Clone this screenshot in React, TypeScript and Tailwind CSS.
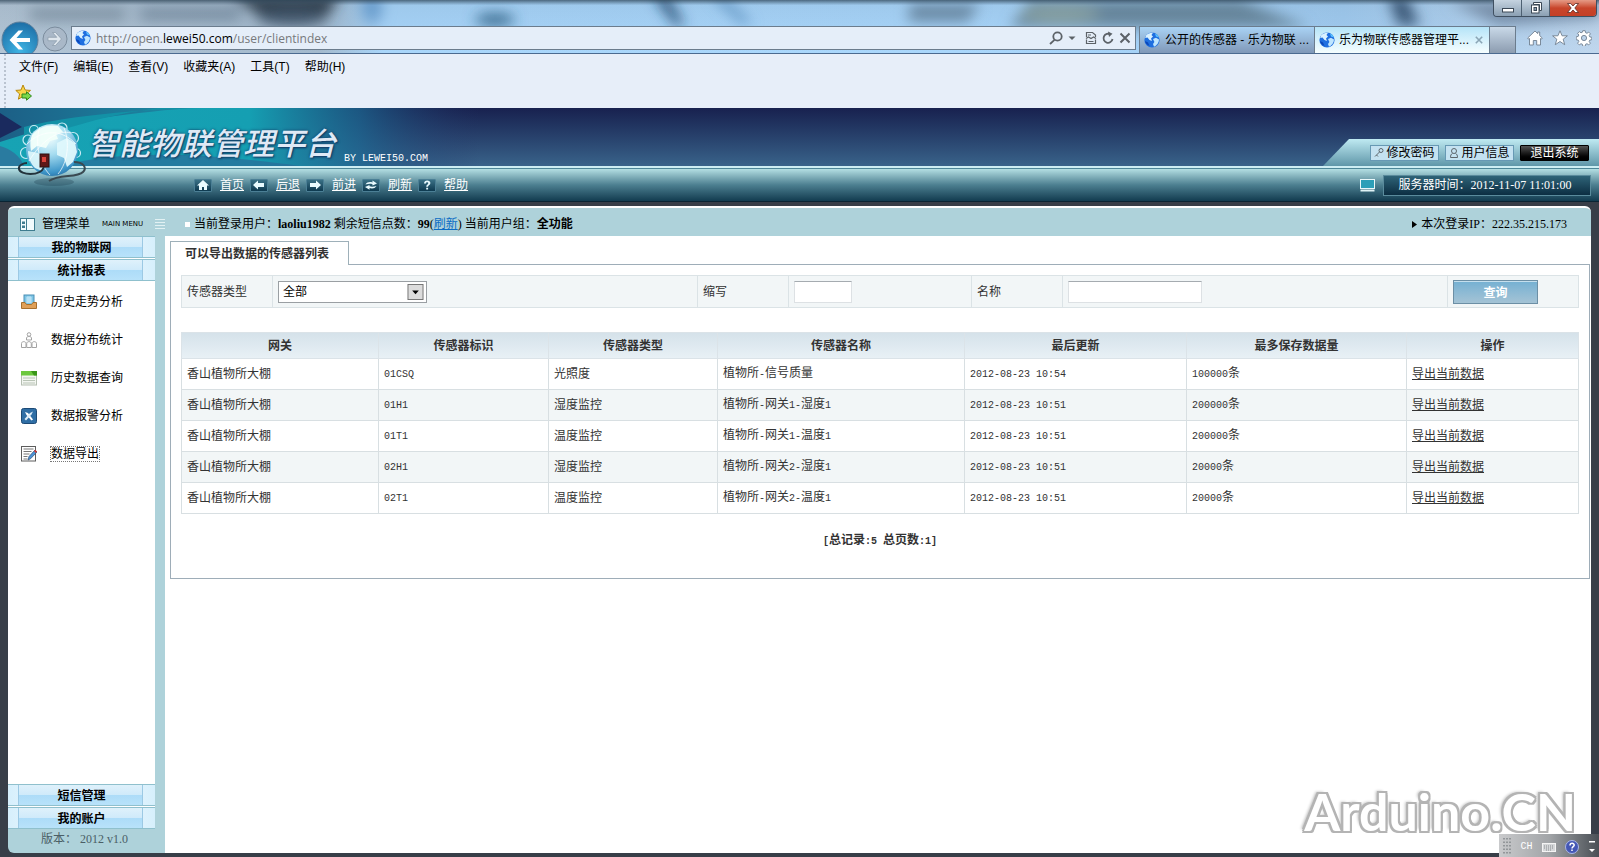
import { useState } from 'react';
import type { ReactNode } from 'react';

type Sensor = {
  gateway: string;
  code: string;
  type: string;
  name: string;
  updated: string;
  limit: string;
};

const sensors: Sensor[] = [
  { gateway: '香山植物所大棚', code: '01CSQ', type: '光照度', name: '植物所-信号质量', updated: '2012-08-23 10:54', limit: '100000条' },
  { gateway: '香山植物所大棚', code: '01H1', type: '湿度监控', name: '植物所-网关1-湿度1', updated: '2012-08-23 10:51', limit: '200000条' },
  { gateway: '香山植物所大棚', code: '01T1', type: '温度监控', name: '植物所-网关1-温度1', updated: '2012-08-23 10:51', limit: '200000条' },
  { gateway: '香山植物所大棚', code: '02H1', type: '湿度监控', name: '植物所-网关2-湿度1', updated: '2012-08-23 10:51', limit: '20000条' },
  { gateway: '香山植物所大棚', code: '02T1', type: '温度监控', name: '植物所-网关2-温度1', updated: '2012-08-23 10:51', limit: '20000条' },
];

const headings = ['网关', '传感器标识', '传感器类型', '传感器名称', '最后更新', '最多保存数据量', '操作'];

const browserMenu = ['文件(F)', '编辑(E)', '查看(V)', '收藏夹(A)', '工具(T)', '帮助(H)'];

// Latin runs are set in a small monospace next to the Chinese text
const Mixed = ({ text }: { text: string }) => (
  <>
    {text.split(/([\x20-\x7e]+)/).map((part, i) =>
      i % 2 === 1 ? (
        <span key={i} className="font-['Liberation_Mono',monospace] text-[10px] whitespace-pre">{part}</span>
      ) : (
        part
      )
    )}
  </>
);

const SiteGlobe = () => (
  <svg viewBox="0 0 16 16" className="h-4 w-4 shrink-0">
    <circle cx="8" cy="8" r="7.6" fill="#1f6fe0" />
    <path d="M2 3.5C4 1 7 .4 9 .8L7.5 3 9 4.5 7 6.5 8 9 5.5 8 3.500 5.500 1.200 6z" fill="#d9f1ff" />
    <path d="M9 7l3-1.200 3 1.800c0 3-2 6-5 7.200L9 12l1.400-2z" fill="#bfe6ff" />
    <path d="M1 9l3 1.500L5.500 14C3 13 1.200 11 1 9z" fill="#0b46b8" />
    <path d="M11 1.400c2 .8 3.400 2.200 4 4.200l-3-1z" fill="#5cc4ff" />
  </svg>
);

const TitleBackdrop = () => (
  <svg className="absolute inset-0 h-full w-full" viewBox="0 0 1599 54" preserveAspectRatio="none" aria-hidden="true">
    <defs>
      <filter id="soft" x="-20%" y="-60%" width="140%" height="220%">
        <feGaussianBlur stdDeviation="7" />
      </filter>
      <linearGradient id="glass" x1="0" x2="1" y1="0" y2="0">
        <stop offset="0" stopColor="#b4c6d6" />
        <stop offset=".2" stopColor="#a3b9cd" />
        <stop offset=".24" stopColor="#a9d6fb" />
        <stop offset=".6" stopColor="#aad7fc" />
        <stop offset=".84" stopColor="#a2cdf2" />
        <stop offset="1" stopColor="#c0d7ee" />
      </linearGradient>
      <linearGradient id="topshade" x1="0" x2="0" y1="0" y2="1">
        <stop offset="0" stopColor="#2c4355" stopOpacity=".75" />
        <stop offset=".1" stopColor="#3a5268" stopOpacity=".1" />
        <stop offset="1" stopColor="#3a5268" stopOpacity="0" />
      </linearGradient>
    </defs>
    <rect width="1599" height="54" fill="url(#glass)" />
    <g filter="url(#soft)">
      <path d="M230-6h110l-14 24-60 2z" fill="#30404e" />
      <rect x="30" y="10" width="95" height="9" fill="#76899a" />
      <rect x="140" y="10" width="100" height="9" fill="#6d8296" />
      <ellipse cx="292" cy="18" rx="34" ry="8" fill="#42566c" />
      <ellipse cx="372" cy="8" rx="10" ry="16" fill="#6ea5d8" />
      <ellipse cx="495" cy="20" rx="20" ry="6" fill="#2f6488" />
      <path d="M654-4l12-2 18 32h-8z" fill="#1c446c" />
      <path d="M712-4h10l30 28h-10z" fill="#5b93c4" />
      <path d="M910 4h70l-12 18h-60z" fill="#6d8da8" />
      <path d="M1030 0h210l70 28H1010z" fill="#6a8aa0" />
      <ellipse cx="1060" cy="14" rx="40" ry="8" fill="#8fa9a8" />
      <path d="M1388-4h18l14 30h-22z" fill="#3a5878" />
      <path d="M1450 2l149-2v18l-100 8z" fill="#7b93ad" />
    </g>
    <rect width="1599" height="54" fill="url(#topshade)" />
  </svg>
);

const BrowserChrome = () => (
  <div className="text-black">
    <div className="relative flex h-[54px] flex-col overflow-hidden border-b border-[#4b6a90]">
      <TitleBackdrop />
      <div className="relative flex h-[26px] items-start justify-end pr-[2px]">
        <div className="flex h-[17px] overflow-hidden rounded-b border border-t-0 border-[#3f4f60]">
          <button aria-label="最小化" className="flex w-7 items-center justify-center border-r border-[#4d6072] bg-gradient-to-b from-[#c5d3e0] to-[#8ba0b3]">
            <svg viewBox="0 0 14 12" className="h-3 w-3.5"><rect x="1.5" y="6.5" width="11" height="3.5" fill="#fff" stroke="#3b4856" /></svg>
          </button>
          <button aria-label="还原" className="flex w-7 items-center justify-center border-r border-[#4d6072] bg-gradient-to-b from-[#c5d3e0] to-[#8ba0b3]">
            <svg viewBox="0 0 14 12" className="h-3 w-3.5">
              <path d="M4.5.5h8v8h-2v-6h-6z" fill="#fff" stroke="#3b4856" />
              <rect x="2.5" y="3" width="7.5" height="8" fill="#fff" stroke="#3b4856" />
              <rect x="5" y="5.5" width="2.5" height="3" fill="#8ba0b3" stroke="#3b4856" />
            </svg>
          </button>
          <button aria-label="关闭窗口" className="flex w-[46px] items-center justify-center bg-gradient-to-b from-[#e59a86] via-[#c8452b] to-[#c43f26]">
            <svg viewBox="0 0 14 12" className="h-3 w-3.5"><path d="M1.5 1.5h3.2L7 4l2.3-2.5h3.2L8.8 6l3.7 4.5H9.3L7 8l-2.3 2.5H1.5L5.2 6z" fill="#fff" stroke="#5a2a24" strokeWidth=".8" /></svg>
          </button>
        </div>
      </div>
      <div className="relative flex flex-1 items-start">
        <div className="flex w-[71px] shrink-0 items-center gap-[3px] pl-px">
          <button aria-label="后退" className="-mt-[7px] -mb-2 h-[38px] w-[38px] shrink-0">
            <svg viewBox="0 0 38 38" className="h-[38px] w-[38px]">
              <defs>
                <radialGradient id="back" cx=".5" cy=".8" r=".8">
                  <stop offset="0" stopColor="#3fb4e4" />
                  <stop offset="1" stopColor="#1d6ea6" />
                </radialGradient>
              </defs>
              <circle cx="19" cy="19" r="18" fill="url(#back)" stroke="#5e7f9b" />
              <path d="M17.5 9.5L8.5 19l9 9.500h4.600L15.500 21H29v-4H15.500l6.600-7.500z" fill="#fff" />
            </svg>
          </button>
          <button aria-label="前进" className="h-[26px] w-[26px] shrink-0">
            <svg viewBox="0 0 26 26" className="h-[26px] w-[26px]">
              <circle cx="13" cy="13" r="12" fill="#a9b8c8" stroke="#7b8c9d" />
              <path d="M13.500 6.500l6 6.500-6 6.500h-3l4.300-4.800H6v-3.400h8.800l-4.300-4.800z" fill="#dfe7ee" stroke="#8798a8" strokeWidth=".7" />
            </svg>
          </button>
        </div>
        <div className="flex h-6 flex-1 items-center border border-[#6b7c8d] bg-[#e5eef9] pl-[3px] pr-1">
          <SiteGlobe />
          <p className="ml-[5px] flex-1 pt-0.5 font-['Open_Sans',sans-serif] text-[12px] text-[#77797c]">
            http://open.<span className="text-black">lewei50.com</span>/user/clientindex
          </p>
          <div className="flex items-center gap-[5px] text-[#5c6268]">
            <svg viewBox="0 0 14 14" className="h-3.5 w-3.5" fill="none" stroke="currentColor" strokeWidth="1.800"><circle cx="8.500" cy="5.500" r="4.200" /><path d="M5.500 8.800L1 13" /></svg>
            <svg viewBox="0 0 8 8" className="h-2 w-2"><path d="M.5 2.500h7L4 6z" fill="currentColor" /></svg>
            <svg viewBox="0 0 12 14" className="ml-1 h-3.5 w-3" fill="none" stroke="currentColor" strokeWidth="1.200"><path d="M1.500 6V1.500h6l3 2.500v2M1.500 8.500v4h9v-4M3 4h3M1 7.500l2.500-1.500 2.500 1.500L8.500 6 11 7.500M3.500 10.500h5" /></svg>
            <svg viewBox="0 0 12 14" className="h-3.5 w-3" fill="none" stroke="currentColor" strokeWidth="1.800"><path d="M8.500 3.500A4.500 4.500 0 1 0 10.500 8" /><path d="M6 .5l4.500 2.300L7 6z" fill="currentColor" stroke="none" /></svg>
            <svg viewBox="0 0 12 14" className="h-3.5 w-3" stroke="currentColor" strokeWidth="2"><path d="M1.500 2.500l9 9M10.500 2.500l-9 9" /></svg>
          </div>
        </div>
        <div className="ml-[3px] flex h-[27px] w-[377px] shrink-0 text-[12px]">
          <button className="flex w-44 items-center gap-[5px] border border-b-0 border-[#6b7c8d] bg-gradient-to-b from-[#a9d3f5] to-[#8098b8] pl-1">
            <SiteGlobe />
            <span className="whitespace-nowrap">公开的传感器 - 乐为物联 ...</span>
          </button>
          <button className="flex w-[174px] items-center gap-1 border-t border-[#6b7c8d] bg-gradient-to-b from-[#b5e4f8] to-[#f6feff] pl-1">
            <SiteGlobe />
            <span className="whitespace-nowrap">乐为物联传感器管理平...</span>
            <svg viewBox="0 0 10 10" className="ml-0.5 h-2 w-2" stroke="#8aa5b5" strokeWidth="2"><path d="M1 1l8 8M9 1L1 9" /></svg>
          </button>
          <button aria-label="新标签页" className="w-[27px] border border-b-0 border-[#6b7c8d] bg-gradient-to-b from-[#c9d9e8] to-[#8c9cb0]" />
        </div>
        <div className="flex h-6 w-[83px] shrink-0 items-center justify-between pl-[11px] pr-[7px]">
          <button aria-label="主页">
            <svg viewBox="0 0 16 16" className="h-4 w-4" fill="#fff" stroke="#6f7f90" strokeWidth=".9"><path d="M8 1l2.700 2.600V2h2v3.600L15.300 8l-1 1.200-.8-.7V15H9.700v-4.500H6.300V15H2.500V8.500l-.8.7-1-1.200z" /></svg>
          </button>
          <button aria-label="收藏">
            <svg viewBox="0 0 16 16" className="h-4 w-4" fill="#fff" stroke="#6f7f90" strokeWidth=".9"><path d="M8 .8l2.100 5h5.300l-4.200 3.400 1.500 5.500L8 11.500l-4.700 3.200 1.500-5.500L.6 5.800h5.300z" /></svg>
          </button>
          <button aria-label="工具">
            <svg viewBox="0 0 16 16" className="h-4 w-4" fill="#fff" stroke="#6f7f90" strokeWidth=".9">
              <path d="M6.800.7h2.400l.4 2 1.400.6 1.700-1.200 1.700 1.700-1.200 1.700.6 1.400 2 .4v2.400l-2 .4-.6 1.400 1.200 1.700-1.700 1.700-1.700-1.200-1.400.6-.4 2H6.800l-.4-2-1.400-.6-1.700 1.200-1.700-1.700 1.200-1.700-.6-1.400-2-.4V6.800l2-.4.6-1.400-1.200-1.700 1.700-1.700L5 2.800l1.400-.6z" />
              <circle cx="8" cy="8" r="2.600" fill="#bcd3ea" />
            </svg>
          </button>
        </div>
      </div>
    </div>
    <div className="flex h-[54px] items-stretch bg-[#e7eef9] pl-1">
      <div className="border-l-2 border-dotted border-[#bac3d0]" />
      <div className="flex flex-col">
        <nav className="flex h-[26px] items-center gap-[15px] pl-[13px] text-[12px]">
          {browserMenu.map((item) => (
            <button key={item}>{item}</button>
          ))}
        </nav>
        <button aria-label="添加到收藏夹栏" className="mt-1 ml-[9px] h-[18px] w-[18px]">
          <svg viewBox="0 0 18 18" className="h-[18px] w-[18px]">
            <path d="M8 1l2.200 5 5.300.4-4 3.500 1.300 5.300L8 12.400l-4.600 2.800 1.200-5.300L.8 6.400 6 6z" fill="#f8d64a" stroke="#b8860b" />
            <path d="M7 10h4.500V7.800L16.500 12l-5 4.200V14H7z" fill="#7bd84a" stroke="#2f8a1c" />
          </svg>
        </button>
      </div>
    </div>
  </div>
);

const BannerArt = () => (
  <svg className="absolute inset-y-0 left-0 h-full w-[480px]" viewBox="0 0 480 58" preserveAspectRatio="none" aria-hidden="true">
    <defs>
      <linearGradient id="teal" x1="0" x2="1">
        <stop offset="0" stopColor="#17a3b4" />
        <stop offset=".52" stopColor="#159fb2" />
        <stop offset=".75" stopColor="#1d6c96" stopOpacity=".7" />
        <stop offset="1" stopColor="#26376a" stopOpacity="0" />
      </linearGradient>
      <linearGradient id="deep" x1="0" x2="1">
        <stop offset="0" stopColor="#1c5f86" />
        <stop offset="1" stopColor="#1c8aa4" />
      </linearGradient>
    </defs>
    <rect width="480" height="58" fill="url(#teal)" />
    <path d="M0 0h190C120 6 60 14 0 34z" fill="url(#deep)" />
    <path d="M0 5l22 14L0 30z" fill="#1a2a5e" />
    <path d="M0 38c10 3 20 9 24 20H0z" fill="#2a7ba0" />
    <path d="M60 58c60-16 140-14 240 0z" fill="#2b6c98" opacity=".7" />
    <path d="M24 19C60 10 120 2 200 0h-40C110 6 80 16 24 34z" fill="#1391a6" />
  </svg>
);

const GlobeLogo = () => (
  <svg className="absolute top-[13px] left-4 h-[66px] w-[72px]" viewBox="0 0 72 66" role="img" aria-label="乐为物联">
    <defs>
      <radialGradient id="orb" cx=".45" cy=".25" r=".85">
        <stop offset="0" stopColor="#f4ffff" />
        <stop offset=".4" stopColor="#a5dcf0" />
        <stop offset=".8" stopColor="#3d95c8" />
        <stop offset="1" stopColor="#1c5d94" />
      </radialGradient>
    </defs>
    <ellipse cx="38" cy="61" rx="20" ry="4" fill="#1b3a4c" opacity=".3" />
    <g fill="none" stroke="#c9ecf6" strokeWidth="1.200">
      <circle cx="12" cy="19" r="5" /><circle cx="10" cy="32" r="5.500" /><circle cx="18" cy="9" r="4.500" /><circle cx="46" cy="7" r="5" />
      <circle cx="57" cy="17" r="5.500" /><circle cx="60" cy="32" r="4.500" />
    </g>
    <circle cx="36" cy="29" r="26" fill="url(#orb)" />
    <path d="M16 14c6-8 17-11 26-9l5 6-7 2 2 5-8 2-4 7-9-2-6 5c-1-6-1-11 1-16z" fill="#f1fffa" opacity=".95" />
    <path d="M41 22l10-5 8 5 2 9-4 10-6 5-3-9-7-3z" fill="#dff8fc" opacity=".95" />
    <path d="M12 30l10 2 7 8-3 10-7-3c-4-4-7-10-7-17z" fill="#e0f8fc" opacity=".9" />
    <g fill="none" stroke="#fff" strokeWidth=".9" opacity=".8">
      <path d="M11 23c14-14 34-16 49 0M13 40c12-20 30-32 42-28M24 6c-6 16 0 38 10 48M48 7c6 14 4 34-6 46" />
    </g>
    <rect x="24" y="33" width="9" height="13" fill="#5e1818" stroke="#2c1010" />
    <rect x="26" y="36" width="4" height="5" fill="#d8443c" />
    <path d="M28 46c-4 10-24 8-25 2-1-4 5-6 8-6" fill="none" stroke="#23333c" strokeWidth="2" />
    <path d="M58 41c10 0 13 6 9 10-6 6-24 2-34 9" fill="none" stroke="#3a4a52" strokeWidth="2" />
  </svg>
);

const NavIcon = ({ children }: { children: ReactNode }) => (
  <span className="flex h-[13px] w-[18px] items-center justify-center rounded-[1px] border border-[#4b7f95] bg-gradient-to-b from-[#3a7186] to-[#0d3a50]">
    <svg viewBox="0 0 14 12" className="h-3 w-3.5" fill="#e9fbff">{children}</svg>
  </span>
);

const navLinks = [
  { label: '首页', icon: <path d="M7 1L1 6.500h2V11h3V8h2v3h3V6.500h2z" /> },
  { label: '后退', icon: <path d="M1 6l5-4.500v2.500h6v4H6v2.500z" /> },
  { label: '前进', icon: <path d="M13 6L8 1.500V4H2v4h6v2.500z" /> },
  { label: '刷新', icon: <path d="M1.500 5.500C3 3 6 2.500 8.500 3.500V1.500L13 4.500 8.500 6.500V5.200C6 4.500 4 5 1.500 5.500zM12.500 7C11 9.500 8 10 5.500 9v1.800L1 8l4.500-2v1.300C8 8 10 7.500 12.500 7z" /> },
  { label: '帮助', icon: <path d="M4 4.500C4 2.500 5.500 1.500 7.200 1.500c1.800 0 3.200 1 3.200 2.600 0 2-2.200 2-2.400 3.600H6.200C6.200 5.700 8.300 5.500 8.300 4.200c0-.6-.5-1-1.200-1C6.400 3.200 6 3.700 6 4.500zM6.200 8.800h1.900v1.800H6.200z" /> },
];

const Banner = () => (
  <header className="relative">
    <div className="relative flex h-[58px] items-end justify-between bg-gradient-to-b from-[#18214f] to-[#39638a]">
      <BannerArt />
      <div className="relative flex items-end pl-[88px] pb-1">
        <h1 className="font-['Noto_Sans_CJK_SC',sans-serif] text-[31px] leading-10 font-medium italic text-[#dfe9f5] [text-shadow:0_0_3px_#123c66,1px_1px_2px_#123c66]">
          智能物联管理平台
        </h1>
        <span className="ml-2 font-['Liberation_Mono',monospace] text-[10px] leading-[6px] whitespace-nowrap text-white">BY LEWEI50.COM</span>
      </div>
      <div className="relative flex h-[27px] items-center gap-1.5 bg-gradient-to-b from-[#bfeaf2] to-[#5f97a9] pr-2.5 pl-[47px] text-[12px] text-black [clip-path:polygon(26px_0,100%_0,100%_100%,0_100%)]">
        <button className="flex h-4 w-[69px] items-center justify-center gap-[2px] border border-[#6799b4] bg-[#c4e2f1]">
          <svg viewBox="0 0 10 12" className="h-3 w-2.5 shrink-0" fill="none" stroke="#5d666c"><circle cx="7" cy="3.500" r="2" /><path d="M5.500 5L1 9.500M2.500 8l1.500 1.500" /></svg>
          <span className="whitespace-nowrap leading-3">修改密码</span>
        </button>
        <button className="flex h-4 w-[69px] items-center justify-center gap-[2px] border border-[#6799b4] bg-[#c4e2f1]">
          <svg viewBox="0 0 10 12" className="h-3 w-2.5 shrink-0" fill="none" stroke="#5d666c"><circle cx="5" cy="4" r="2.500" /><path d="M3.500 6.500C2 7 1.500 8.500 1.500 10.500h7c0-2-.5-3.500-2-4" /></svg>
          <span className="whitespace-nowrap leading-3">用户信息</span>
        </button>
        <button className="flex h-4 w-[69px] items-center justify-center rounded-[1px] border border-black bg-gradient-to-b from-[#555] via-[#1c1c1c] to-black leading-3 text-white">
          退出系统
        </button>
      </div>
    </div>
    <div className="h-[3px] border-b border-[#4d8798] bg-[#cdeef3]" />
    <div className="flex h-[33px] items-center justify-between border-b border-[#0a2433] bg-gradient-to-b from-[#b4dfe3] via-[#4c7f90] to-[#123c50] pr-2 pl-[194px] text-[12px] text-white">
      <nav className="flex items-center gap-1.5">
        {navLinks.map((link) => (
          <a key={link.label} href="#" className="flex items-center gap-2 underline">
            <NavIcon>{link.icon}</NavIcon>
            {link.label}
          </a>
        ))}
      </nav>
      <div className="flex items-center gap-2">
        <svg viewBox="0 0 15 13" className="h-[13px] w-[15px]"><rect x=".5" y=".5" width="14" height="9" fill="#2c9fb8" stroke="#e7f7fa" /><path d="M.5 11.500h14" stroke="#dff2f5" strokeWidth="2" /></svg>
        <p className="flex h-[21px] w-[208px] items-center justify-center border border-[#5a8b9c] bg-gradient-to-b from-[#2f6478] to-[#0c2e42] pr-1 font-['Liberation_Serif','Noto_Sans_CJK_SC',serif] whitespace-nowrap">
          服务器时间：2012-11-07 11:01:00
        </p>
      </div>
    </div>
    <GlobeLogo />
  </header>
);

const GroupButton = ({ children }: { children: ReactNode }) => (
  <button className="flex h-[22px] w-full items-stretch border-y border-[#8fc0cd] bg-gradient-to-r from-[#d6effc] via-white to-[#d6effc] pr-3 pl-2.5">
    <span className="flex flex-1 items-center justify-center border-x border-[#9cc9e4] bg-[linear-gradient(to_bottom,#dff1fb_0%,#cfeafa_50%,#addcf8_52%,#b8e2fa_100%)] pt-px pl-0.5 text-[12px] leading-4 font-bold text-black">
      {children}
    </span>
  </button>
);

const menuItems = [
  {
    label: '历史走势分析',
    icon: (
      <>
        <rect x="3" y="1" width="10" height="10" fill="#7fc6e6" stroke="#4a8fb5" />
        <path d="M5 4h6M5 6h6M5 8h6M7 2v7M9 2v7" stroke="#dff4ff" strokeWidth=".7" />
        <path d="M.5 8.500h3.500l1.500 2h5l1.500-2h3.500v6H.5z" fill="#e0a058" stroke="#a8702e" />
      </>
    ),
  },
  {
    label: '数据分布统计',
    icon: (
      <g fill="#fff" stroke="#a3a3a3">
        <circle cx="8" cy="2.500" r="1.800" /><path d="M5.500 8V6c0-2 5-2 5 0v2z" />
        <path d="M.5 15.500v-4c0-2.500 4.500-2.500 4.500 0v4zM5.700 15.500v-4c0-2.500 4.600-2.500 4.600 0v4zM11 15.500v-4c0-2.500 4.500-2.500 4.500 0v4z" />
      </g>
    ),
  },
  {
    label: '历史数据查询',
    icon: (
      <>
        <rect x=".5" y="1.500" width="15" height="13.500" fill="#f3f6f1" stroke="#b5bfb2" />
        <path d="M0 1h16v4.500H0z" fill="#6cc83e" />
        <path d="M10 1h6v4.500h-3z" fill="#3a9618" />
        <path d="M2 8h12M2 10.500h12M2 13h12" stroke="#b9c4b6" />
      </>
    ),
  },
  {
    label: '数据报警分析',
    icon: (
      <>
        <rect x=".5" y=".5" width="15" height="15" rx="2" fill="#2f6ea5" stroke="#1d4a76" />
        <path d="M4 4l3 1 5 6.500-1.500 1L5.500 7z" fill="#fff" />
        <path d="M12 3.500l-1.500 3L5 12.500 3.500 11l5.500-6z" fill="#dcecf8" />
      </>
    ),
  },
  {
    label: '数据导出',
    focused: true,
    icon: (
      <>
        <rect x=".5" y=".5" width="14" height="14.500" fill="#fff" stroke="#5d5d5d" />
        <path d="M2.500 3h10M2.500 5.500h8M2.500 8h6M2.500 10.500h4M2.500 13h4" stroke="#777" />
        <path d="M7 14l1-3.500L14 4l2 2-6.500 6.800z" fill="#4d93d6" stroke="#2c4e74" strokeWidth=".7" />
        <path d="M13 5l1.200-1.300L16 5.500 14.800 7z" fill="#d8352c" />
      </>
    ),
  },
];

const Sidebar = () => (
  <aside className="flex w-[157px] shrink-0 flex-col">
    <div className="flex h-7 items-center pt-1 pl-3 text-[12px] text-black">
      <svg viewBox="0 0 15 13" className="h-[13px] w-[15px]"><rect x=".5" y=".5" width="14" height="12" fill="#f2fbfd" stroke="#3f7c8f" /><path d="M6.500 1v11" stroke="#3f7c8f" /><path d="M2 3.500h3v2.500H2zM2 7.500h3V10H2z" fill="#3f7c8f" /></svg>
      <span className="ml-[7px]">管理菜单</span>
      <span className="ml-3 font-['DejaVu_Sans',sans-serif] text-[7px] whitespace-nowrap">MAIN MENU</span>
      <svg viewBox="0 0 10 12" className="ml-auto h-3 w-2.5" stroke="#e2f1f3"><path d="M0 1.500h10M0 4.500h10M0 7.500h10M0 10.500h10" /></svg>
    </div>
    <div className="mr-2.5 flex flex-1 flex-col gap-px bg-white">
      <GroupButton>我的物联网</GroupButton>
      <GroupButton>统计报表</GroupButton>
      <ul className="flex-1 pt-px">
        {menuItems.map((item) => (
          <li key={item.label} className="flex h-[38px] items-center gap-3.5 pl-[13px] text-[12px] text-black">
            <svg viewBox="0 0 16 16" className="h-4 w-4 shrink-0">{item.icon}</svg>
            <a href="#" className={item.focused ? 'outline outline-1 outline-dotted outline-[#777] leading-[14px]' : 'leading-[14px]'}>
              {item.label}
            </a>
          </li>
        ))}
      </ul>
      <GroupButton>短信管理</GroupButton>
      <GroupButton>我的账户</GroupButton>
    </div>
    <p className="mr-2.5 flex h-6 items-center justify-center pb-1 pl-1.5 font-['Liberation_Serif','Noto_Sans_CJK_SC',serif] text-[12px] text-[#4b5f66]">
      版本： 2012 v1.0
    </p>
  </aside>
);

const SearchBar = () => {
  const [type, setType] = useState('all');
  const cell = 'border border-[#dbe3e6] px-[5px]';

  return (
    <table className="h-[33px] w-full table-fixed border-collapse bg-[#f2f6f7]">
      <colgroup>
        <col className="w-[91px]" />
        <col className="w-[425px]" />
        <col className="w-[91px]" />
        <col className="w-[183px]" />
        <col className="w-[91px]" />
        <col className="w-[385px]" />
        <col className="w-[131px]" />
      </colgroup>
      <tbody>
        <tr>
          <td className={cell}><label htmlFor="type">传感器类型</label></td>
          <td className={cell}>
            <div className="relative h-[22px] w-[149px]">
              <select
                id="type"
                value={type}
                onChange={(e) => setType(e.target.value)}
                className="h-full w-full appearance-none border border-[#9a9fa3] bg-white pl-1 text-black"
              >
                <option value="all">全部</option>
              </select>
              <svg viewBox="0 0 17 17" className="pointer-events-none absolute top-[3px] right-[3px] h-4 w-[17px]">
                <rect x=".5" y=".5" width="16" height="16" fill="#dcdcdc" stroke="#707070" />
                <path d="M5 7h7l-3.500 4z" fill="#000" />
              </svg>
            </div>
          </td>
          <td className={cell}><label htmlFor="abbr">缩写</label></td>
          <td className={cell}>
            <input id="abbr" type="text" className="block h-[22px] w-[58px] border border-[#dde1e4] border-t-[#a5abb0] bg-white px-1" />
          </td>
          <td className={cell}><label htmlFor="name">名称</label></td>
          <td className={cell}>
            <input id="name" type="text" className="block h-[22px] w-[134px] border border-[#dde1e4] border-t-[#a5abb0] bg-white px-1" />
          </td>
          <td className={cell}>
            <button className="block h-6 w-[85px] border border-[#6c8fa5] bg-gradient-to-b from-[#74b0d2] to-[#a4c3d5] pt-0.5 font-bold text-white shadow-[inset_0_1px_0_#c5dfed]">
              查询
            </button>
          </td>
        </tr>
      </tbody>
    </table>
  );
};

const SensorTable = () => (
  <table className="w-full table-fixed border-collapse">
    <colgroup>
      <col className="w-[197px]" />
      <col className="w-[170px]" />
      <col className="w-[169px]" />
      <col className="w-[247px]" />
      <col className="w-[222px]" />
      <col className="w-[220px]" />
      <col className="w-[172px]" />
    </colgroup>
    <thead>
      <tr className="h-[26px] bg-gradient-to-b from-[#d5e2ea] to-[#e9f1f6]">
        {headings.map((heading) => (
          <th key={heading} className="border border-[#dbe3e8] font-bold">{heading}</th>
        ))}
      </tr>
    </thead>
    <tbody>
      {sensors.map((sensor) => (
        <tr key={sensor.code} className="h-[31px] even:bg-[#f2f6f7]">
          {[sensor.gateway, sensor.code, sensor.type, sensor.name, sensor.updated, sensor.limit].map((value, i) => (
            <td key={i} className="border border-[#d8dfe2] px-[5px] pb-px leading-4"><Mixed text={value} /></td>
          ))}
          <td className="border border-[#d8dfe2] px-[5px] pb-px leading-4">
            <a href="#" className="underline">导出当前数据</a>
          </td>
        </tr>
      ))}
    </tbody>
  </table>
);

const Content = () => (
  <main className="flex min-w-0 flex-1 flex-col">
    <div className="flex h-7 items-center justify-between pt-1 pr-6 pl-5 font-['Liberation_Serif','Noto_Sans_CJK_SC',serif] text-[12px] text-black">
      <p className="flex items-center whitespace-pre">
        <span className="mr-1 h-[5px] w-[5px] bg-white" />
        当前登录用户：<b>laoliu1982</b> 剩余短信点数：<b>99</b>(<a href="#" className="text-[#0b6cc4] underline">刷新</a>) 当前用户组：<b>全功能</b>
      </p>
      <p className="flex items-center gap-1">
        <svg viewBox="0 0 5 7" className="h-[7px] w-[5px]"><path d="M0 0l5 3.500L0 7z" /></svg>
        本次登录IP：222.35.215.173
      </p>
    </div>
    <div className="flex-1 bg-white pt-[5px] pr-px pl-[5px] text-[12px] text-[#333]">
      <div className="relative z-10 -mb-px flex h-6 w-[179px] items-center border border-b-0 border-[#9eb0b9] bg-white pl-[14px] font-bold">
        可以导出数据的传感器列表
      </div>
      <div className="border border-[#9eadb8] px-2.5 pt-2.5 pb-[27px]">
        <SearchBar />
        <div className="mt-6"><SensorTable /></div>
        <p className="mt-[17px] text-center leading-[18px] font-bold"><Mixed text="[总记录:5 总页数:1]" /></p>
      </div>
    </div>
  </main>
);

const LanguageBar = () => (
  <div className="absolute right-0 bottom-0 z-20 flex h-[23px] w-[100px] items-end justify-between bg-gradient-to-r from-[#c9cacc] via-[#a2a5a8] to-[#4a4f55] px-1 pb-[3px] font-['Liberation_Mono',monospace] text-[10px] leading-[14px] text-white">
    <svg viewBox="0 0 8 16" className="h-4 w-2" stroke="#83878b" strokeWidth="1.500" strokeDasharray="1.500 2"><path d="M1 0v16M4 0v16M7 0v16" /></svg>
    <span>CH</span>
    <svg viewBox="0 0 14 9" className="mb-0.5 h-[9px] w-3.5"><rect x=".5" y=".5" width="13" height="8" fill="#d5d7d9" stroke="#f4f4f4" /><path d="M2 3h10M2 5h10M4 7h6" stroke="#878b8f" strokeDasharray="1 1" /></svg>
    <button aria-label="帮助" className="flex h-3.5 w-3.5 items-center justify-center rounded-full border border-[#aab6ea] bg-[#4457b5]">
      <svg viewBox="0 0 8 10" className="h-2.5 w-2" fill="none" stroke="#fff" strokeWidth="1.500"><path d="M2 3.500C2 .5 6.300.8 6.200 3.200 6 4.700 4 4.700 4 6.500M4 7.500V9" /></svg>
    </button>
    <svg viewBox="0 0 6 16" className="h-4 w-1.5" fill="#fff"><path d="M0 3h6v1.500H0zM0 11h6l-3 3z" /></svg>
  </div>
);

const App = () => (
  <div className="relative flex min-h-screen flex-col bg-[#383e48] font-['Liberation_Sans','Noto_Sans_CJK_SC',sans-serif]">
    <BrowserChrome />
    <Banner />
    <div className="mx-2 mt-1 mb-1 flex flex-1 overflow-hidden rounded-t-md rounded-bl-md border-t-2 border-white bg-[#aed2da]">
      <Sidebar />
      <Content />
    </div>
    <div className="absolute right-[23px] bottom-5 z-10 font-['Lato',sans-serif] text-[52px] leading-none font-bold text-white [text-shadow:2px_0_0_#b4b4b4,-2px_0_0_#b4b4b4,0_2px_0_#b4b4b4,0_-2px_0_#b4b4b4,2px_2px_0_#b4b4b4,-2px_2px_0_#b4b4b4,2px_-2px_0_#b4b4b4,-2px_-2px_0_#b4b4b4,-3px_-2px_3px_#bbb]">
      Arduino.CN
    </div>
    <LanguageBar />
  </div>
);

export default App;
